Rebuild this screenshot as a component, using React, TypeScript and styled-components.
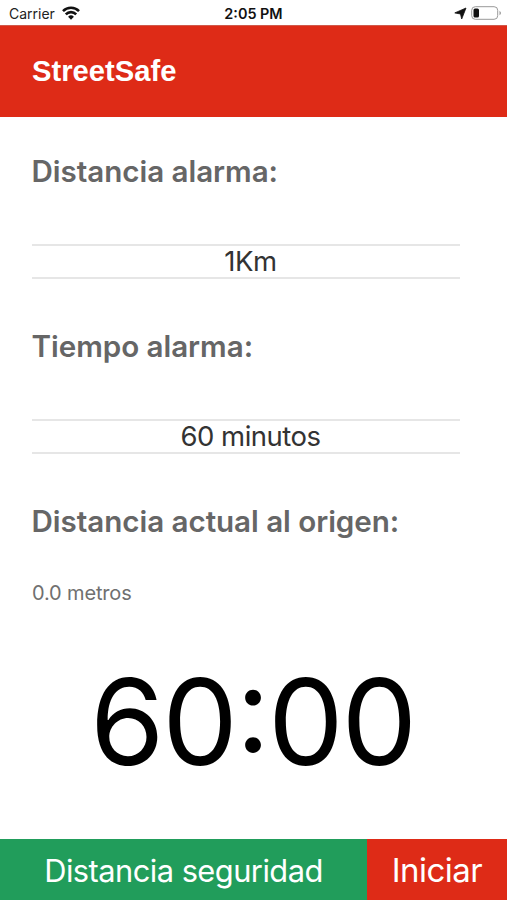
import React from "react";
import styled, { createGlobalStyle } from "styled-components";

const GlobalStyle = createGlobalStyle`
  * { box-sizing: border-box; }
  body { margin: 0; background: #fff; font-family: Inter, sans-serif; }
`;
const Screen = styled.main`
  width: 507px; height: 900px; display: flex; flex-direction: column; background: #fff; overflow: hidden;
`;
const StatusBar = styled.div`
  height: 25px; display: grid; grid-template-columns: 1fr auto 1fr; align-items: center;
  padding: 1px 5px 0 9px; font-size: 14px; color: #222;
`;
const Carrier = styled.div`display: flex; align-items: center; gap: 7px; letter-spacing: 0;`;
const Clock = styled.div`font-weight: 600; color: #111; font-size: 14.4px; margin-right: 4px;`;
const Indicators = styled.div`display: flex; justify-content: flex-end; align-items: center; gap: 4px;`;
const Header = styled.header`
  height: 92px; background: #de2b17; border-top: 1px solid #d0594b;
  display: flex; align-items: center; padding: 0 0 2px 32px;
`;
const Title = styled.h1`
  margin: 0; color: #fff; font: bold 29.2px/36px "Liberation Sans", sans-serif;
`;
const Content = styled.section`
  flex: 1; display: flex; flex-direction: column; padding: 37px 32px 0;
`;
const Label = styled.h2`
  margin: 0 0 0 -0.5px; height: 36px; line-height: 35px; font-size: 29.6px; font-weight: 600;
  letter-spacing: -0.05px; color: #666; white-space: nowrap;
`;
const Picker = styled.div`
  width: 428px; height: 35px; margin: 54px 0 50px; border: solid #e6e6e6; border-width: 2px 0;
  display: flex; align-items: center; justify-content: center; padding: 0 0 2px 9px;
  font-size: 27.5px; letter-spacing: -0.5px; color: #333;
`;
const Reading = styled.p`
  margin: 40px 0 0; font-size: 20px; line-height: 26px; letter-spacing: -0.15px; color: #707070;
`;
const Timer = styled.div`
  margin: 54px 0 0; text-align: center; font-size: 120px; line-height: 124px; letter-spacing: -2.2px;
  text-indent: -2px; color: #000; white-space: nowrap; font-feature-settings: "calt" 1;
`;
const Actions = styled.footer`height: 61px; display: grid; grid-template-columns: 367px 140px;`;
const Action = styled.button<{ $color: string; $size: number }>`
  border: 0; padding: 1px 0 0; background: ${(p) => p.$color}; color: #fff;
  font: 400 ${(p) => p.$size}px Inter, sans-serif; letter-spacing: -0.52px; white-space: nowrap;
`;

export default function App() {
  return (
    <Screen>
      <GlobalStyle />
      <StatusBar>
        <Carrier>
          Carrier
          <svg width="18" height="14" viewBox="0 0 18 14" fill="none" stroke="#111" strokeWidth="2.6">
            <path d="M1 5.1a11.3 11.3 0 0 1 16 0M3.8 8.3a7.4 7.4 0 0 1 10.4 0" />
            <path d="M9 13.7 6.1 10.7a4.2 4.2 0 0 1 5.8 0Z" fill="#111" stroke="none" />
          </svg>
        </Carrier>
        <Clock>2:05 PM</Clock>
        <Indicators>
          <svg width="13" height="13" viewBox="0 0 13 13">
            <path d="M12 1 7.7 12 6.5 7 .8 5.9Z" fill="#111" stroke="#111" strokeWidth=".8" strokeLinejoin="round" />
          </svg>
          <svg width="31" height="14" viewBox="0 0 31 14">
            <rect x=".7" y=".7" width="26" height="12.6" rx="3.6" fill="#fff" stroke="#999" />
            <rect x="2.5" y="2.5" width="5.5" height="9" rx="1.5" fill="#111" />
            <path d="M28.5 4.7q3 2.3 0 4.6Z" fill="#999" />
          </svg>
        </Indicators>
      </StatusBar>
      <Header><Title>StreetSafe</Title></Header>
      <Content>
        <Label>Distancia alarma:</Label>
        <Picker>1Km</Picker>
        <Label>Tiempo alarma:</Label>
        <Picker>60 minutos</Picker>
        <Label>Distancia actual al origen:</Label>
        <Reading>0.0 metros</Reading>
        <Timer>60:00</Timer>
      </Content>
      <Actions>
        <Action $color="#219d5b" $size={30.8}>Distancia seguridad</Action>
        <Action $color="#de2b17" $size={33}>Iniciar</Action>
      </Actions>
    </Screen>
  );
}
